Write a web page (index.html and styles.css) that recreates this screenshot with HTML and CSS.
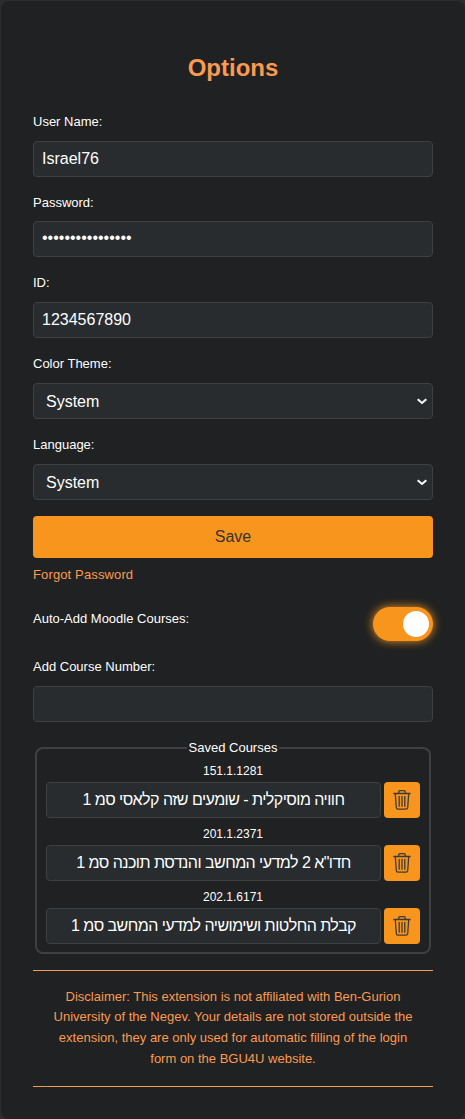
FILE: index.html
```html
<!DOCTYPE html>
<html lang="en">
<head>
<meta charset="utf-8">
<title>Options</title>
<link rel="stylesheet" href="styles.css">
</head>
<body>
<svg width="0" height="0" class="sprite" aria-hidden="true">
  <symbol id="trash" viewBox="0 0 18 20">
    <g fill="none" stroke="#3b3b3b" stroke-width="1.3" stroke-linejoin="round">
      <path d="M.4 3.5h17.2M5.8 3.3V1.8Q5.8.7 6.9.7h4.2q1.1 0 1.1 1.1v1.5"/>
      <path d="M2.3 3.7l1 13.8q.1 1.7 1.8 1.7h7.8q1.7 0 1.8-1.7l1-13.8"/>
      <path d="M6.2 6v10.8M9 6v10.8M11.8 6v10.8"/>
    </g>
  </symbol>
  <symbol id="chevron" viewBox="0 0 10 7">
    <path d="M.7 1.3L5 5l4.3-3.7" fill="none" stroke="#fff" stroke-width="2"/>
  </symbol>
</svg>
<main class="card">
  <h1 class="title">Options</h1>
  <form class="form">
    <div class="field"><label class="label" for="user">User Name:</label><input class="input" id="user" type="text" value="Israel76"></div>
    <div class="field"><label class="label" for="pass">Password:</label><input class="input password" id="pass" type="password" value="abcdefghijklmnop"></div>
    <div class="field"><label class="label" for="ident">ID:</label><input class="input" id="ident" type="text" value="1234567890"></div>
    <div class="field"><label class="label" for="theme">Color Theme:</label><div class="select-box"><select class="input select" id="theme"><option>System</option></select><svg class="chevron"><use href="#chevron"/></svg></div></div>
    <div class="field"><label class="label" for="lang">Language:</label><div class="select-box"><select class="input select" id="lang"><option>System</option></select><svg class="chevron"><use href="#chevron"/></svg></div></div>
    <button class="save" type="button">Save</button>
  </form>
  <a class="forgot">Forgot Password</a>
  <div class="auto">
    <span class="label">Auto-Add Moodle Courses:</span>
    <span class="toggle"><span class="knob"></span></span>
  </div>
  <div class="field"><label class="label" for="course">Add Course Number:</label><input class="input" id="course" type="text"></div>
  <fieldset class="courses">
    <legend class="legend">Saved Courses</legend>
    <div class="course"><span class="number">151.1.1281</span>
      <div class="row"><div class="input name" dir="rtl">חוויה מוסיקלית - שומעים שזה קלאסי סמ 1</div><button class="delete" type="button"><svg class="icon"><use href="#trash"/></svg></button></div></div>
    <div class="course"><span class="number">201.1.2371</span>
      <div class="row"><div class="input name" dir="rtl">חדו"א 2 למדעי המחשב והנדסת תוכנה סמ 1</div><button class="delete" type="button"><svg class="icon"><use href="#trash"/></svg></button></div></div>
    <div class="course"><span class="number">202.1.6171</span>
      <div class="row"><div class="input name" dir="rtl">קבלת החלטות ושימושיה למדעי המחשב סמ 1</div><button class="delete" type="button"><svg class="icon"><use href="#trash"/></svg></button></div></div>
  </fieldset>
  <p class="disclaimer">Disclaimer: This extension is not affiliated with Ben-Gurion University of the Negev. Your details are not stored outside the extension, they are only used for automatic filling of the login form on the BGU4U website.</p>
</main>
</body>
</html>
```
FILE: styles.css
```css
* { box-sizing: border-box; }
body {
  margin: 0;
  padding: 1px 0 0 1px;
  background: #2b2c2e;
  color: #fff;
  font: 13px/20.8px "Liberation Sans", Arial, sans-serif;
  overflow: hidden;
}
.sprite { display: none; }
.card {
  width: 464px;
  height: 1118px;
  padding: 48.3px 32px 0;
  border-radius: 8px;
  background: #202122;
}
.title {
  width: 400px;
  margin: 0 0 24.1px;
  font-size: 24px;
  line-height: 38.4px;
  text-align: center;
  color: #fb9a50;
}
.form { display: flex; flex-direction: column; gap: 16px; }
.field { display: flex; flex-direction: column; gap: 8px; }
.form, .field, .auto, .forgot, .disclaimer { width: 400px; }
.input {
  width: 100%;
  height: 36px;
  margin: 0;
  padding: 0 8px;
  border: 1px solid #3e4042;
  border-radius: 4px;
  outline: 0;
  background: #282c2e;
  color: #fff;
  font: 16px "Liberation Sans", Arial, sans-serif;
}
.password { padding-bottom: 2px; }
.select-box { position: relative; height: 36px; }
.select { display: block; appearance: none; padding: 1px 24px 0 12px; }
.chevron { position: absolute; right: 6px; top: 15px; width: 10px; height: 7px; }
.save, .delete {
  margin: 0;
  padding: 0;
  border: 0;
  border-radius: 4px;
  background: #f8951d;
  color: #333;
  font: 16px "Liberation Sans", Arial, sans-serif;
}
.save { height: 42px; }
.forgot {
  display: block;
  margin-top: 7.2px;
  color: #fb9a50;
  letter-spacing: .13px;
}
.auto {
  display: flex;
  justify-content: space-between;
  align-items: flex-start;
  height: 26px;
  margin: 23.2px 0 22.4px;
}
.toggle {
  display: flex;
  justify-content: flex-end;
  width: 60px;
  height: 34px;
  padding: 4px;
  border-radius: 17px;
  margin-top: -2px;
  background: #f8951d;
  box-shadow: 0 0 10px #f8951d;
}
.knob { width: 26px; height: 26px; border-radius: 50%; background: #fff; }
.courses {
  width: 396px;
  height: 216px;
  margin: 15.4px 2px 0;
  padding: 2.4px 9px 0;
  border: 2px solid #3e4042;
  border-radius: 8px;
}
.legend { margin: 0 auto; padding: 0 2px; }
.course { height: 63px; }
.number { display: block; height: 21px; line-height: 20px; text-align: center; font-size: 12px; }
.row { display: flex; gap: 3px; }
.name { width: 335px; line-height: 34px; text-align: center; letter-spacing: -.53px; }
.delete { display: flex; align-items: center; justify-content: center; width: 36px; height: 36px; }
.icon { width: 18px; height: 20px; }
.disclaimer {
  margin: 16.6px 0 0;
  padding: 15.5px 16px 16.5px;
  border-top: 1px solid #fb9a50;
  border-bottom: 1px solid #fb9a50;
  text-align: center;
  color: #fb9a50;
}
```
